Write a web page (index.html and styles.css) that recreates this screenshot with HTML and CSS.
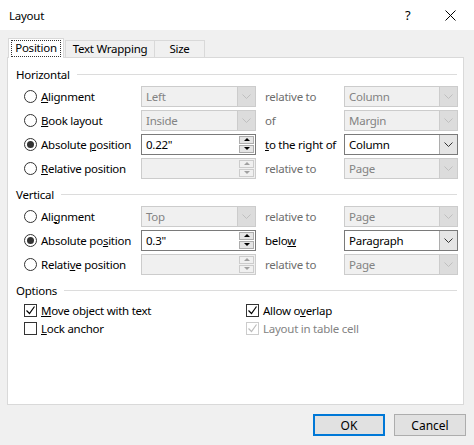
FILE: index.html
```html
<!DOCTYPE html>
<html lang="en">
<head>
  <meta charset="UTF-8">
  <title>Layout</title>
  <link rel="stylesheet" href="styles.css">
</head>
<body>
  <div class="dialog">
    <!-- Title bar -->
    <div class="titlebar">
      <span class="title">Layout</span>
      <span class="help">?</span>
      <span class="close">
        <svg width="11" height="11" viewBox="0 0 11 11"><path d="M0.5 0.5 L10.5 10.5 M10.5 0.5 L0.5 10.5" stroke="#000" stroke-width="1"/></svg>
      </span>
    </div>

    <div class="content">
      <!-- Tabs -->
      <div class="tabs">
        <div class="tab active"><span class="focus">Position</span></div>
        <div class="tab wrap">Text Wrapping</div>
        <div class="tab size">Size</div>
      </div>

      <div class="panel">
        <!-- Horizontal -->
        <div class="group-title"><span>Horizontal</span></div>
        <div class="rows">
          <div class="row">
            <label class="radio"><span class="dot"></span><span><u>A</u>lignment</span></label>
            <div class="combo disabled"><span class="value">Left</span><span class="drop"><svg width="9" height="5" viewBox="0 0 9 5"><path d="M0.5 0.5 L4.5 4.5 L8.5 0.5" fill="none" stroke="currentColor"/></svg></span></div>
            <span class="mid muted">relative to</span>
            <div class="combo disabled"><span class="value">Column</span><span class="drop"><svg width="9" height="5" viewBox="0 0 9 5"><path d="M0.5 0.5 L4.5 4.5 L8.5 0.5" fill="none" stroke="currentColor"/></svg></span></div>
          </div>
          <div class="row">
            <label class="radio"><span class="dot"></span><span><u>B</u>ook layout</span></label>
            <div class="combo disabled"><span class="value">Inside</span><span class="drop"><svg width="9" height="5" viewBox="0 0 9 5"><path d="M0.5 0.5 L4.5 4.5 L8.5 0.5" fill="none" stroke="currentColor"/></svg></span></div>
            <span class="mid muted">of</span>
            <div class="combo disabled"><span class="value">Margin</span><span class="drop"><svg width="9" height="5" viewBox="0 0 9 5"><path d="M0.5 0.5 L4.5 4.5 L8.5 0.5" fill="none" stroke="currentColor"/></svg></span></div>
          </div>
          <div class="row">
            <label class="radio checked"><span class="dot"></span><span>Absolute <u>p</u>osition</span></label>
            <div class="spin"><span class="value">0.22"</span><span class="arrows"><span class="up"></span><span class="down"></span></span></div>
            <span class="mid"><u>t</u>o the right of</span>
            <div class="combo"><span class="value">Column</span><span class="drop"><svg width="9" height="5" viewBox="0 0 9 5"><path d="M0.5 0.5 L4.5 4.5 L8.5 0.5" fill="none" stroke="currentColor"/></svg></span></div>
          </div>
          <div class="row">
            <label class="radio"><span class="dot"></span><span><u>R</u>elative position</span></label>
            <div class="spin disabled"><span class="value"></span><span class="arrows"><span class="up"></span><span class="down"></span></span></div>
            <span class="mid muted">relative to</span>
            <div class="combo disabled"><span class="value">Page</span><span class="drop"><svg width="9" height="5" viewBox="0 0 9 5"><path d="M0.5 0.5 L4.5 4.5 L8.5 0.5" fill="none" stroke="currentColor"/></svg></span></div>
          </div>
        </div>

        <!-- Vertical -->
        <div class="group-title"><span>Vertical</span></div>
        <div class="rows">
          <div class="row">
            <label class="radio"><span class="dot"></span><span>Ali<u>g</u>nment</span></label>
            <div class="combo disabled"><span class="value">Top</span><span class="drop"><svg width="9" height="5" viewBox="0 0 9 5"><path d="M0.5 0.5 L4.5 4.5 L8.5 0.5" fill="none" stroke="currentColor"/></svg></span></div>
            <span class="mid muted">relative to</span>
            <div class="combo disabled"><span class="value">Page</span><span class="drop"><svg width="9" height="5" viewBox="0 0 9 5"><path d="M0.5 0.5 L4.5 4.5 L8.5 0.5" fill="none" stroke="currentColor"/></svg></span></div>
          </div>
          <div class="row">
            <label class="radio checked"><span class="dot"></span><span>Absolute po<u>s</u>ition</span></label>
            <div class="spin"><span class="value">0.3"</span><span class="arrows"><span class="up"></span><span class="down"></span></span></div>
            <span class="mid">belo<u>w</u></span>
            <div class="combo"><span class="value">Paragraph</span><span class="drop"><svg width="9" height="5" viewBox="0 0 9 5"><path d="M0.5 0.5 L4.5 4.5 L8.5 0.5" fill="none" stroke="currentColor"/></svg></span></div>
          </div>
          <div class="row">
            <label class="radio"><span class="dot"></span><span>Relati<u>v</u>e position</span></label>
            <div class="spin disabled"><span class="value"></span><span class="arrows"><span class="up"></span><span class="down"></span></span></div>
            <span class="mid muted">relative to</span>
            <div class="combo disabled"><span class="value">Page</span><span class="drop"><svg width="9" height="5" viewBox="0 0 9 5"><path d="M0.5 0.5 L4.5 4.5 L8.5 0.5" fill="none" stroke="currentColor"/></svg></span></div>
          </div>
        </div>

        <!-- Options -->
        <div class="group-title options-title"><span>Options</span></div>
        <div class="options">
          <label class="check checked"><span class="box"><svg width="11" height="11" viewBox="0 0 11 11"><path d="M1.5 5.5 L4.5 8.5 L9.5 1.5" fill="none" stroke="currentColor" stroke-width="1.2"/></svg></span><span><u>M</u>ove object with text</span></label>
          <label class="check checked"><span class="box"><svg width="11" height="11" viewBox="0 0 11 11"><path d="M1.5 5.5 L4.5 8.5 L9.5 1.5" fill="none" stroke="currentColor" stroke-width="1.2"/></svg></span><span>Allow o<u>v</u>erlap</span></label>
          <label class="check"><span class="box"></span><span><u>L</u>ock anchor</span></label>
          <label class="check checked disabled"><span class="box"><svg width="11" height="11" viewBox="0 0 11 11"><path d="M1.5 5.5 L4.5 8.5 L9.5 1.5" fill="none" stroke="currentColor" stroke-width="1.2"/></svg></span><span>Layout in table cell</span></label>
        </div>
      </div>

      <!-- Buttons -->
      <div class="footer">
        <button class="btn default">OK</button>
        <button class="btn">Cancel</button>
      </div>
    </div>
  </div>
</body>
</html>
```

FILE: styles.css
```css
/* General */
body {
  margin: 0;
  font-family: 'Noto Sans', 'Open Sans', sans-serif;
  font-size: 11.5px;
  letter-spacing: -0.25px;
  color: #000;
  background-color: #f0f0f0;
}

.dialog {
  width: 474px;
  height: 445px;
  display: flex;
  flex-direction: column;
  background-color: #f0f0f0;
}

/* Title bar */
.titlebar {
  height: 30px;
  flex: none;
  display: flex;
  align-items: center;
  background-color: #fff;
  padding-left: 9px;
}

.titlebar .title {
  flex: 1;
}

.titlebar .help {
  width: 14px;
  font-size: 13px;
  margin-right: 26px;
}

.titlebar .close {
  display: flex;
  margin-right: 18px;
}

/* Content */
.content {
  flex: 1;
  padding: 8px 8px 0 7px;
}

/* Tabs */
.tabs {
  display: flex;
  align-items: flex-end;
  height: 19px;
  padding-left: 1px;
  position: relative;
  z-index: 1;
}

.tab {
  box-sizing: border-box;
  height: 17px;
  border: 1px solid #d9d9d9;
  border-bottom: none;
  background-color: #f0f0f0;
  display: flex;
  align-items: center;
  justify-content: center;
  line-height: 14px;
}

.tab.active {
  width: 56px;
  height: 20px;
  margin-bottom: -1px;
  background-color: #fff;
  border-color: #d9d9d9;
}

.tab.active .focus {
  border: 1px dotted #333;
  padding: 0 3px 1px;
  line-height: 14px;
}

.tab.wrap {
  width: 90px;
  margin-left: 1px;
}

.tab.size {
  width: 51px;
  margin-left: -1px;
}

/* Panel */
.panel {
  box-sizing: border-box;
  height: 348px;
  width: 457px;
  border: 1px solid #d9d9d9;
  background-color: #fff;
  padding: 8px 6px 0 8px;
}

.group-title {
  display: flex;
  align-items: center;
  height: 16px;
}

.group-title::after {
  content: '';
  flex: 1;
  height: 1px;
  background-color: #dcdcdc;
  margin-left: 7px;
}

.rows {
  margin: 2px 0 6px 8px;
}

.row {
  display: grid;
  grid-template-columns: 117px 115px 88px 114px;
  align-items: center;
  height: 24px;
}

.mid {
  padding-left: 9px;
}

.muted {
  color: #6d6d6d;
}

/* Radio buttons */
.radio {
  display: flex;
  align-items: center;
}

.radio .dot {
  box-sizing: border-box;
  width: 13px;
  height: 13px;
  border: 1px solid #333;
  border-radius: 50%;
  margin-right: 4px;
  display: flex;
  align-items: center;
  justify-content: center;
}

.radio.checked .dot::after {
  content: '';
  width: 7px;
  height: 7px;
  border-radius: 50%;
  background-color: #333;
}

/* Combo boxes */
.combo,
.spin {
  box-sizing: border-box;
  height: 21px;
  display: flex;
  align-items: stretch;
  border: 1px solid #7a7a7a;
  background-color: #fff;
}

.combo .value,
.spin .value {
  flex: 1;
  padding-left: 4px;
  display: flex;
  align-items: center;
}

.combo .drop {
  width: 17px;
  display: flex;
  align-items: center;
  justify-content: center;
  background-color: #e5e5e5;
  border-left: 1px solid #adadad;
  color: #333;
}

.combo.disabled {
  background-color: #f0f0f0;
  border-color: #cccccc;
  color: #838383;
}

.combo.disabled .drop {
  background-color: #dcdcdc;
  border-left-color: #cccccc;
  color: #bfbfbf;
}

/* Spin boxes */
.spin .arrows {
  width: 15px;
  display: flex;
  flex-direction: column;
  justify-content: center;
  gap: 1px;
  padding: 1px 1px 1px 0;
}

.spin .up,
.spin .down {
  flex: 1;
  border: 1px solid #adadad;
  background-color: #e5e5e5;
  display: flex;
  align-items: center;
  justify-content: center;
}

.spin .up::after,
.spin .down::after {
  content: '';
  border-left: 3px solid transparent;
  border-right: 3px solid transparent;
}

.spin .up::after {
  border-bottom: 3px solid #000;
}

.spin .down::after {
  border-top: 3px solid #000;
}

.spin.disabled {
  border-color: #cccccc;
  background-color: #f0f0f0;
}

.spin.disabled .up,
.spin.disabled .down {
  border-color: #cccccc;
  background-color: #f0f0f0;
}

.spin.disabled .up::after {
  border-bottom-color: #a0a0a0;
}

.spin.disabled .down::after {
  border-top-color: #a0a0a0;
}

/* Options */
.options-title {
  margin-top: 1px;
}

.options {
  display: grid;
  grid-template-columns: 222px auto;
  grid-auto-rows: 18px;
  margin: 3px 0 0 8px;
}

.check {
  display: flex;
  align-items: center;
}

.check .box {
  box-sizing: border-box;
  width: 13px;
  height: 13px;
  border: 1px solid #333;
  background-color: #fff;
  margin-right: 4px;
  display: flex;
  align-items: center;
  justify-content: center;
  color: #000;
}

.check.disabled {
  color: #838383;
}

.check.disabled .box {
  border-color: #cccccc;
  color: #bcbcbc;
}

/* Footer buttons */
.footer {
  display: flex;
  justify-content: flex-end;
  gap: 9px;
  padding-top: 9px;
}

.btn {
  box-sizing: border-box;
  width: 72px;
  height: 22px;
  border: 1px solid #adadad;
  background-color: #e1e1e1;
  font-family: inherit;
  font-size: 12px;
  padding: 0;
}

.btn.default {
  border: 2px solid #0078d7;
}
```
